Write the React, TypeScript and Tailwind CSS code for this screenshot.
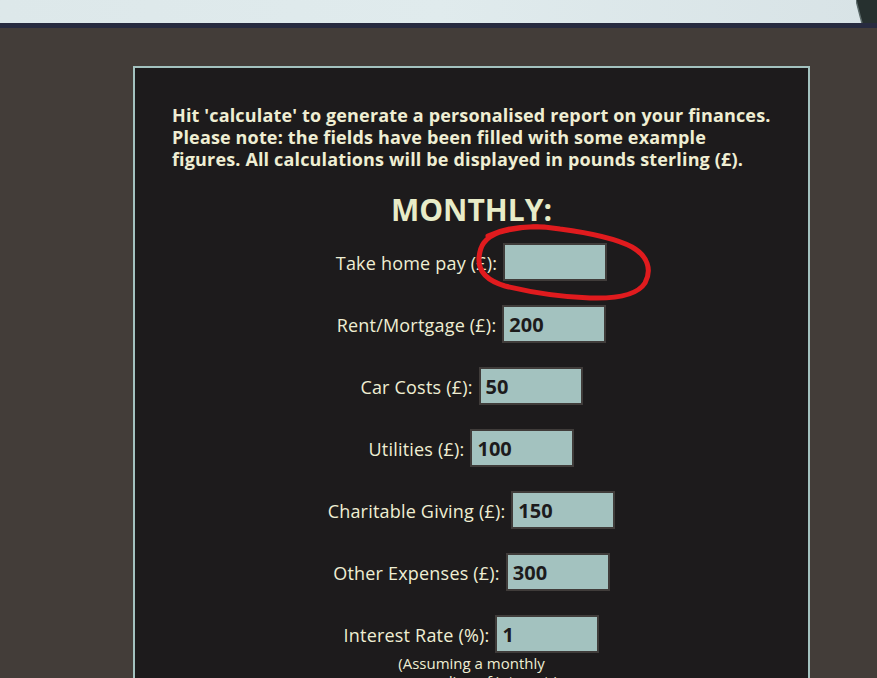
const fields: { label: string; value: string }[] = [
  { label: 'Take home pay (£):', value: '' },
  { label: 'Rent/Mortgage (£):', value: '200' },
  { label: 'Car Costs (£):', value: '50' },
  { label: 'Utilities (£):', value: '100' },
  { label: 'Charitable Giving (£):', value: '150' },
  { label: 'Other Expenses (£):', value: '300' },
  { label: 'Interest Rate (%):', value: '1' }
]

function Field({ label, value }: { label: string; value: string }) {
  return (
    <div className="flex h-[38px] items-center justify-center gap-[6px]">
      <label className="pt-[3px] text-[18px] tracking-[0.2px] text-[#efeed3]">{label}</label>
      <input
        type="text"
        defaultValue={value}
        className="h-[38px] w-[104px] border-2 border-[#403c3a] bg-[#a3c2bf] px-[5px] text-[20px] font-bold text-[#1d1b1c] outline-none"
      />
    </div>
  )
}

export default function App() {
  return (
    <div
      className="relative min-h-screen bg-[#433d39]"
      style={{ fontFamily: '"Open Sans", "Noto Sans", sans-serif' }}
    >
      {/* banner image strip */}
      <div className="relative h-[23px] overflow-hidden bg-gradient-to-r from-[#dde8ea] via-[#e0ebed] to-[#d8e3e6]">
        <svg className="absolute right-0 top-0" width="21" height="23" viewBox="0 0 21 23">
          <path d="M0 0 C2 8 4 16 6 23 L21 23 L21 0 Z" fill="#26302f" />
          <path d="M0 0 C2 8 4 16 6 23" fill="none" stroke="#5c6a6a" strokeWidth="1.5" />
        </svg>
      </div>
      <div className="h-[5px] bg-[#272b40]" />

      <div className="pl-[133px] pt-[38px]">
        <div className="w-[677px] border-2 border-[#a3c2bf] bg-[#1d1b1c] px-[37px] pb-10 pt-[36px]">
          <p className="whitespace-nowrap text-[18px] font-bold leading-[22px] tracking-[0.15px] text-[#efeed3]">
            Hit 'calculate' to generate a personalised report on your finances.
            <br />
            Please note: the fields have been filled with some example
            <br />
            figures. All calculations will be displayed in pounds sterling (£).
          </p>

          <h2 className="mt-[22px] text-center text-[30px] font-bold leading-[36px] text-[#e8ecc8]">
            MONTHLY:
          </h2>

          <div className="mt-[15px] flex flex-col gap-[24px]">
            {fields.map((f) => (
              <Field key={f.label} label={f.label} value={f.value} />
            ))}
          </div>

          <p className="mx-auto mt-[1px] w-[190px] text-center text-[15px] leading-[18px] text-[#efeed3]">
            (Assuming a monthly compounding of interest in savings)
          </p>
        </div>
      </div>

      {/* red hand-drawn annotation */}
      <svg className="pointer-events-none absolute left-0 top-0" width="877" height="678">
        <path
          d="M488 236 C505 228 530 224 560 229 C590 233 615 238 632 247 C648 256 652 270 645 283 C638 294 620 299 590 298 C560 297 530 292 505 286 C488 281 478 272 479 258 C480 246 484 238 500 232 C515 228 530 226 545 227"
          fill="none"
          stroke="#e01b1e"
          strokeWidth="5"
          strokeLinecap="round"
        />
      </svg>
    </div>
  )
}
